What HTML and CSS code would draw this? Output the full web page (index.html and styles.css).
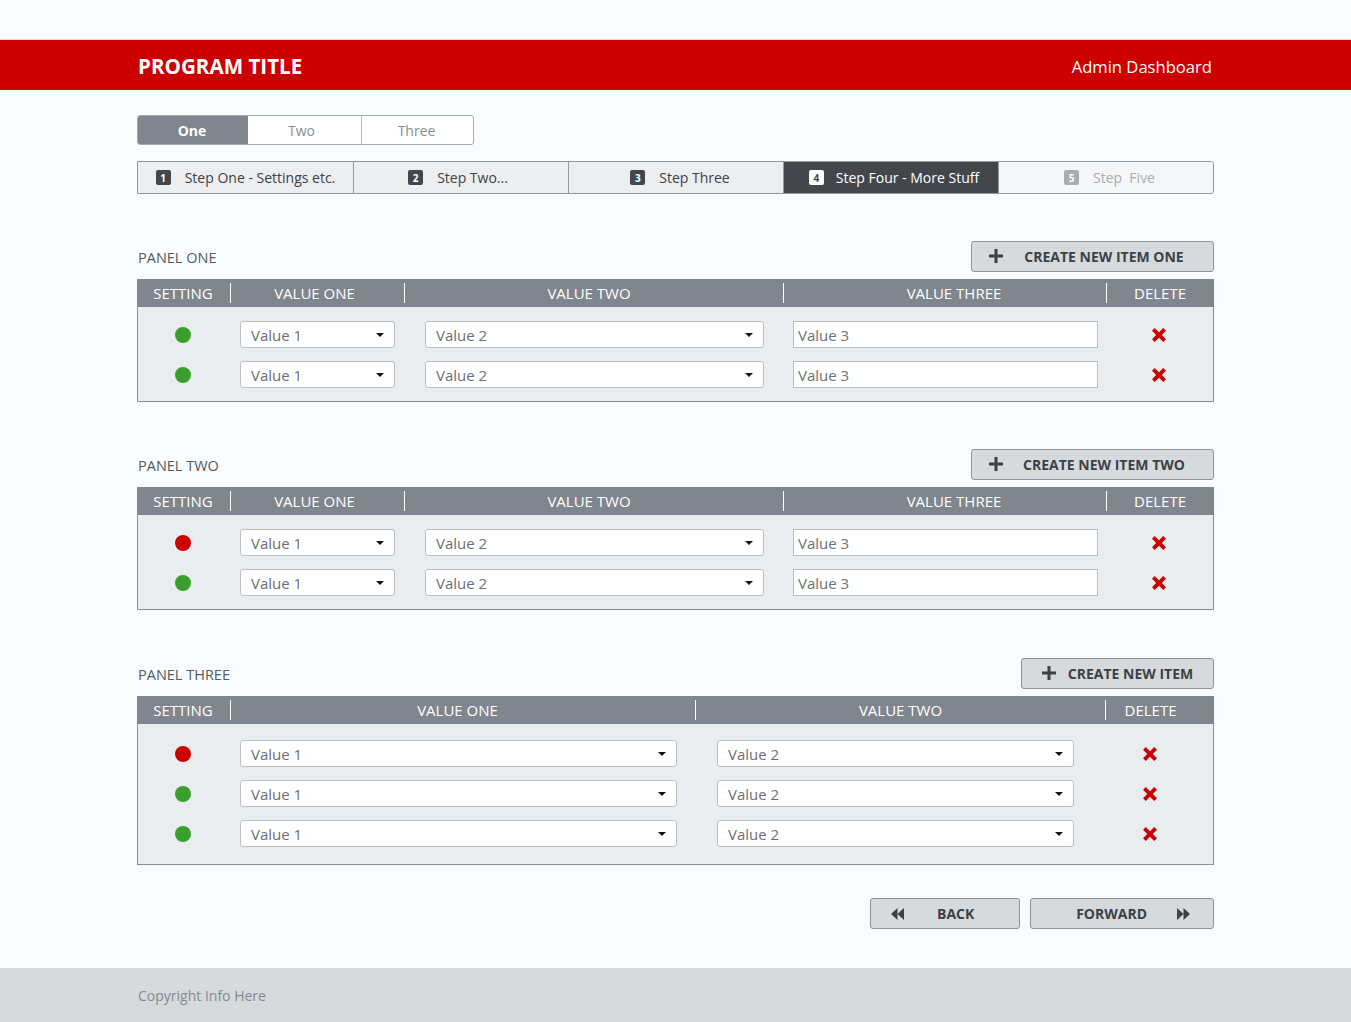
FILE: index.html
```html
<!DOCTYPE html>
<html lang="en">
<head>
<meta charset="utf-8">
<title>Admin Dashboard</title>
<link rel="stylesheet" href="styles.css">
</head>
<body>
<header class="topbar">
  <div class="wrap topbar-inner">
    <h1 class="title">PROGRAM TITLE</h1>
    <span class="subtitle">Admin Dashboard</span>
  </div>
</header>

<main class="wrap">
  <nav class="tabs">
    <a class="tab tab-one active">One</a>
    <a class="tab tab-two">Two</a>
    <a class="tab tab-three">Three</a>
  </nav>

  <nav class="steps">
    <div class="step step-1"><span class="badge">1</span>Step One - Settings etc.</div>
    <div class="step step-2"><span class="badge">2</span>Step Two...</div>
    <div class="step step-3"><span class="badge">3</span>Step Three</div>
    <div class="step step-4 current"><span class="badge">4</span>Step Four - More Stuff</div>
    <div class="step step-5 disabled"><span class="badge">5</span>Step&nbsp; Five</div>
  </nav>

  <!-- PANEL ONE -->
  <section class="panel">
    <div class="panel-head">
      <h2 class="panel-title">PANEL ONE</h2>
      <button class="btn btn-create btn-wide"><svg class="ico-plus" width="14" height="14" viewBox="0 0 14 14"><path d="M5.5 0h3v5.5H14v3H8.5V14h-3V8.5H0v-3h5.5z"/></svg><span>CREATE NEW ITEM ONE</span></button>
    </div>
    <div class="grid-table cols5">
      <div class="thead">
        <div class="th">SETTING</div>
        <div class="th th-v1">VALUE ONE</div>
        <div class="th th-v2">VALUE TWO</div>
        <div class="th th-v3">VALUE THREE</div>
        <div class="th">DELETE</div>
      </div>
      <div class="tbody">
        <div class="row">
          <div class="cell c-dot"><span class="dot green"></span></div>
          <div class="cell c-a"><div class="select">Value 1<svg class="caret" width="8" height="4" viewBox="0 0 8 4"><path d="M0 0h8L4 4z"/></svg></div></div>
          <div class="cell c-b"><div class="select">Value 2<svg class="caret" width="8" height="4" viewBox="0 0 8 4"><path d="M0 0h8L4 4z"/></svg></div></div>
          <div class="cell c-c"><div class="input">Value 3</div></div>
          <div class="cell c-del"><svg class="ico-x" width="14" height="14" viewBox="0 0 14 14"><path d="M2.8 0 7 4.2 11.2 0 14 2.8 9.8 7 14 11.2 11.2 14 7 9.8 2.8 14 0 11.2 4.2 7 0 2.8z"/></svg></div>
        </div>
        <div class="row">
          <div class="cell c-dot"><span class="dot green"></span></div>
          <div class="cell c-a"><div class="select">Value 1<svg class="caret" width="8" height="4" viewBox="0 0 8 4"><path d="M0 0h8L4 4z"/></svg></div></div>
          <div class="cell c-b"><div class="select">Value 2<svg class="caret" width="8" height="4" viewBox="0 0 8 4"><path d="M0 0h8L4 4z"/></svg></div></div>
          <div class="cell c-c"><div class="input">Value 3</div></div>
          <div class="cell c-del"><svg class="ico-x" width="14" height="14" viewBox="0 0 14 14"><path d="M2.8 0 7 4.2 11.2 0 14 2.8 9.8 7 14 11.2 11.2 14 7 9.8 2.8 14 0 11.2 4.2 7 0 2.8z"/></svg></div>
        </div>
      </div>
    </div>
  </section>

  <!-- PANEL TWO -->
  <section class="panel">
    <div class="panel-head">
      <h2 class="panel-title">PANEL TWO</h2>
      <button class="btn btn-create btn-wide"><svg class="ico-plus" width="14" height="14" viewBox="0 0 14 14"><path d="M5.5 0h3v5.5H14v3H8.5V14h-3V8.5H0v-3h5.5z"/></svg><span>CREATE NEW ITEM TWO</span></button>
    </div>
    <div class="grid-table cols5">
      <div class="thead">
        <div class="th">SETTING</div>
        <div class="th th-v1">VALUE ONE</div>
        <div class="th th-v2">VALUE TWO</div>
        <div class="th th-v3">VALUE THREE</div>
        <div class="th">DELETE</div>
      </div>
      <div class="tbody">
        <div class="row">
          <div class="cell c-dot"><span class="dot red"></span></div>
          <div class="cell c-a"><div class="select">Value 1<svg class="caret" width="8" height="4" viewBox="0 0 8 4"><path d="M0 0h8L4 4z"/></svg></div></div>
          <div class="cell c-b"><div class="select">Value 2<svg class="caret" width="8" height="4" viewBox="0 0 8 4"><path d="M0 0h8L4 4z"/></svg></div></div>
          <div class="cell c-c"><div class="input">Value 3</div></div>
          <div class="cell c-del"><svg class="ico-x" width="14" height="14" viewBox="0 0 14 14"><path d="M2.8 0 7 4.2 11.2 0 14 2.8 9.8 7 14 11.2 11.2 14 7 9.8 2.8 14 0 11.2 4.2 7 0 2.8z"/></svg></div>
        </div>
        <div class="row">
          <div class="cell c-dot"><span class="dot green"></span></div>
          <div class="cell c-a"><div class="select">Value 1<svg class="caret" width="8" height="4" viewBox="0 0 8 4"><path d="M0 0h8L4 4z"/></svg></div></div>
          <div class="cell c-b"><div class="select">Value 2<svg class="caret" width="8" height="4" viewBox="0 0 8 4"><path d="M0 0h8L4 4z"/></svg></div></div>
          <div class="cell c-c"><div class="input">Value 3</div></div>
          <div class="cell c-del"><svg class="ico-x" width="14" height="14" viewBox="0 0 14 14"><path d="M2.8 0 7 4.2 11.2 0 14 2.8 9.8 7 14 11.2 11.2 14 7 9.8 2.8 14 0 11.2 4.2 7 0 2.8z"/></svg></div>
        </div>
      </div>
    </div>
  </section>

  <!-- PANEL THREE -->
  <section class="panel panel-three">
    <div class="panel-head">
      <h2 class="panel-title">PANEL THREE</h2>
      <button class="btn btn-create btn-narrow"><svg class="ico-plus" width="14" height="14" viewBox="0 0 14 14"><path d="M5.5 0h3v5.5H14v3H8.5V14h-3V8.5H0v-3h5.5z"/></svg><span>CREATE NEW ITEM</span></button>
    </div>
    <div class="grid-table cols4">
      <div class="thead">
        <div class="th">SETTING</div>
        <div class="th th-w1">VALUE ONE</div>
        <div class="th">VALUE TWO</div>
        <div class="th th-del">DELETE</div>
      </div>
      <div class="tbody tbody-3">
        <div class="row">
          <div class="cell c-dot"><span class="dot red"></span></div>
          <div class="cell c-a3"><div class="select">Value 1<svg class="caret" width="8" height="4" viewBox="0 0 8 4"><path d="M0 0h8L4 4z"/></svg></div></div>
          <div class="cell c-b3"><div class="select">Value 2<svg class="caret" width="8" height="4" viewBox="0 0 8 4"><path d="M0 0h8L4 4z"/></svg></div></div>
          <div class="cell c-del c-del3"><svg class="ico-x" width="14" height="14" viewBox="0 0 14 14"><path d="M2.8 0 7 4.2 11.2 0 14 2.8 9.8 7 14 11.2 11.2 14 7 9.8 2.8 14 0 11.2 4.2 7 0 2.8z"/></svg></div>
        </div>
        <div class="row">
          <div class="cell c-dot"><span class="dot green"></span></div>
          <div class="cell c-a3"><div class="select">Value 1<svg class="caret" width="8" height="4" viewBox="0 0 8 4"><path d="M0 0h8L4 4z"/></svg></div></div>
          <div class="cell c-b3"><div class="select">Value 2<svg class="caret" width="8" height="4" viewBox="0 0 8 4"><path d="M0 0h8L4 4z"/></svg></div></div>
          <div class="cell c-del c-del3"><svg class="ico-x" width="14" height="14" viewBox="0 0 14 14"><path d="M2.8 0 7 4.2 11.2 0 14 2.8 9.8 7 14 11.2 11.2 14 7 9.8 2.8 14 0 11.2 4.2 7 0 2.8z"/></svg></div>
        </div>
        <div class="row">
          <div class="cell c-dot"><span class="dot green"></span></div>
          <div class="cell c-a3"><div class="select">Value 1<svg class="caret" width="8" height="4" viewBox="0 0 8 4"><path d="M0 0h8L4 4z"/></svg></div></div>
          <div class="cell c-b3"><div class="select">Value 2<svg class="caret" width="8" height="4" viewBox="0 0 8 4"><path d="M0 0h8L4 4z"/></svg></div></div>
          <div class="cell c-del c-del3"><svg class="ico-x" width="14" height="14" viewBox="0 0 14 14"><path d="M2.8 0 7 4.2 11.2 0 14 2.8 9.8 7 14 11.2 11.2 14 7 9.8 2.8 14 0 11.2 4.2 7 0 2.8z"/></svg></div>
        </div>
      </div>
    </div>
  </section>

  <div class="pager">
    <button class="btn btn-back"><svg width="13" height="12" viewBox="0 0 13 12"><path d="M6.5 0v12L0 6zM13 0v12L6.5 6z"/></svg><span>BACK</span></button>
    <button class="btn btn-forward"><span>FORWARD</span><svg width="13" height="12" viewBox="0 0 13 12"><path d="M0 0v12l6.5-6zM6.5 0v12L13 6z"/></svg></button>
  </div>
</main>

<footer class="footer">
  <div class="wrap">Copyright Info Here</div>
</footer>
</body>
</html>
```

FILE: styles.css
```css
* { box-sizing: border-box; }

html, body {
  margin: 0;
  padding: 0;
}

body {
  background: #f8fcfd;
  font-family: "Open Sans", "Liberation Sans", sans-serif;
  color: #555;
  font-size: 14px;
}

.wrap {
  width: 1077px;
  margin: 0 auto;
}

/* Top bar */
.topbar {
  margin-top: 39px;
  border-top: 1px solid #d9dcde;
  background: #cc0000;
  height: 51px;
}
.topbar-inner {
  height: 50px;
  display: flex;
  align-items: center;
  justify-content: space-between;
  padding: 2px 2px 0 1px;
}
.title {
  margin: 0;
  color: #fff;
  font-size: 20.6px;
  font-weight: 700;
}
.subtitle {
  color: #fff;
  font-size: 16.6px;
}

/* Tabs */
.tabs {
  display: flex;
  margin-top: 25px;
  width: 337px;
  height: 30px;
  border: 1px solid #a9adb0;
  border-radius: 3px;
  overflow: hidden;
  background: #fff;
}
.tab {
  display: flex;
  align-items: center;
  justify-content: center;
  font-size: 14px;
  color: #8a8e92;
}
.tab-one { width: 110px; padding-right: 2px; }
.tab-two { width: 114px; border-right: 1px solid #b9bdc0; padding-right: 6px; }
.tab-three { flex: 1; padding-right: 2px; }
.tab.active {
  background: #7f868d;
  color: #fff;
  font-weight: 700;
}

/* Steps */
.steps {
  display: grid;
  grid-template-columns: repeat(5, 1fr);
  margin-top: 16px;
  height: 33px;
  border: 1px solid #94999d;
  border-radius: 0 3px 3px 0;
  background: #eceef0;
  overflow: hidden;
}
.step {
  display: flex;
  align-items: center;
  justify-content: center;
  font-size: 14px;
  color: #3d4145;
  border-left: 1px solid #94999d;
}
.step:first-child { border-left: 0; }
.step-2 { padding-right: 6px; }
.step-3 { padding-left: 8px; }
.step-4 { padding-left: 6px; }
.step-5 { padding-left: 7px; }
.badge {
  display: inline-flex;
  align-items: center;
  justify-content: center;
  width: 15px;
  height: 15px;
  margin-right: 14px;
  border-radius: 2px;
  background: #43474c;
  color: #fff;
  font-size: 10px;
  font-weight: 700;
}
.step-4 .badge { margin-right: 12px; }
.step.current {
  background: #43474c;
  color: #fff;
}
.step.current .badge {
  background: #fff;
  color: #43474c;
}
.step.disabled {
  background: #f4f6f7;
  color: #a9adb1;
}
.step.disabled .badge {
  background: #a9adb1;
  color: #fff;
}

/* Panels */
.panel { margin-top: 47px; }
.panel-three { margin-top: 48px; }
.panel-head {
  display: flex;
  justify-content: space-between;
  align-items: center;
  height: 30px;
  margin-bottom: 8px;
}
.panel-title {
  margin: 0;
  padding: 3px 0 0 1px;
  font-size: 14.5px;
  font-weight: 400;
  color: #555a5e;
}

.btn {
  display: flex;
  align-items: center;
  height: 31px;
  padding: 0;
  border: 1px solid #8e9397;
  border-radius: 3px;
  background: #d6dadd;
  color: #3d4145;
  font-family: "Open Sans", "Liberation Sans", sans-serif;
  font-size: 14px;
  font-weight: 700;
  cursor: pointer;
}
.btn svg { fill: #3d4145; flex: none; }
.btn-create { padding: 0 8px 0 17px; }
.btn-create span { flex: 1; text-align: center; }
.btn-wide { width: 243px; }
.btn-narrow { width: 193px; padding-left: 20px; }

/* Table */
.grid-table { width: 1077px; }
.thead {
  display: grid;
  align-items: center;
  height: 28px;
  background: #7f868d;
  border: 1px solid #7f868d;
  border-width: 0 1px;
}
.th {
  height: 20px;
  line-height: 20px;
  text-align: center;
  color: #fff;
  font-size: 15px;
  border-left: 1px solid #fff;
}
.th:first-child { border-left: 0; padding-right: 2px; }
.th-v1 { padding-right: 6px; }
.th-v2 { padding-right: 10px; }
.th-v3 { padding-left: 18px; }
.th-w1 { padding-right: 11px; }
.th-del { padding-right: 18px; }

.tbody {
  background: #eaedef;
  border: 1px solid #8a8f93;
  border-top: 0;
  padding: 14px 0 13px;
  display: flex;
  flex-direction: column;
  gap: 13px;
}
.tbody-3 { padding: 16px 0 17px; }

.row { display: grid; height: 27px; }

.cols5 .thead,
.cols5 .row { grid-template-columns: 92px 174px 379px 323px 107px; }
.cols4 .thead,
.cols4 .row { grid-template-columns: 92px 465px 410px 108px; }

.cell {
  display: flex;
  align-items: center;
}
.c-dot, .c-del { justify-content: center; }
.c-dot { padding-right: 2px; }
.c-del { padding-right: 2px; }
.c-a { padding: 0 9px 0 10px; }
.c-b { padding: 0 19px 0 21px; }
.c-c { padding: 0 8px 0 10px; }
.c-a3 { padding: 0 18px 0 10px; }
.c-b3 { padding: 0 31px 0 22px; }
.c-del3 { padding-right: 18px; }

.dot {
  width: 16px;
  height: 16px;
  border-radius: 50%;
}
.dot.green { background: #3a9f2d; }
.dot.red { background: #cc0000; }

.select, .input {
  width: 100%;
  height: 27px;
  display: flex;
  align-items: center;
  background: #fff;
  border: 1px solid #bcc0c3;
  font-size: 15px;
  color: #6b6f73;
}
.select {
  border-radius: 3px;
  padding: 0 10px 0 10px;
  justify-content: space-between;
}
.input { padding-left: 4px; }
.caret { fill: #111; }

.ico-x { fill: #cc0000; }

/* Pager */
.pager {
  display: flex;
  justify-content: flex-end;
  gap: 10px;
  margin-top: 33px;
}
.btn-back {
  width: 150px;
  padding-left: 20px;
  gap: 33px;
}
.btn-forward {
  width: 184px;
  justify-content: flex-end;
  padding-right: 23px;
  gap: 30px;
}

/* Footer */
.footer {
  margin-top: 39px;
  height: 54px;
  background: #d6dadd;
  display: flex;
  align-items: center;
  color: #868b8f;
  font-size: 14px;
}
.footer .wrap { padding-left: 1px; }
```
